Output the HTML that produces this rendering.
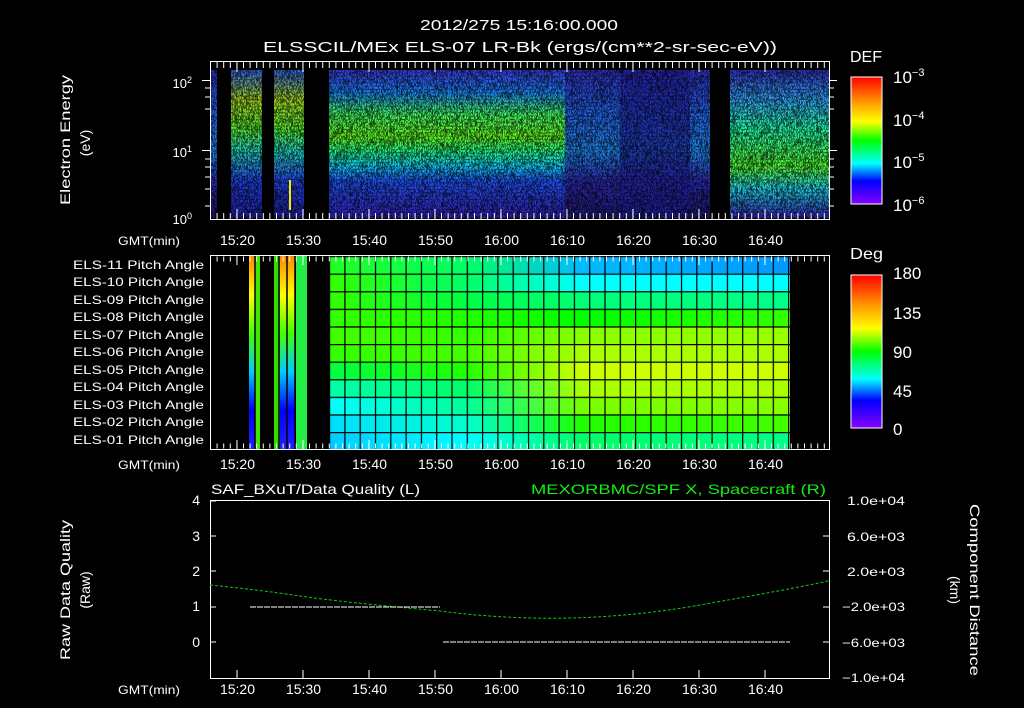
<!DOCTYPE html>
<html><head><meta charset="utf-8"><style>
html,body{margin:0;padding:0;background:#000;width:1024px;height:708px;overflow:hidden}
svg text{font-family:"Liberation Sans",sans-serif;fill:#fff}
</style></head><body>
<svg width="1024" height="708" viewBox="0 0 1024 708" xmlns="http://www.w3.org/2000/svg">
<defs>
<linearGradient id="cb" x1="0" y1="0" x2="0" y2="1">
<stop offset="0" stop-color="#f00"/><stop offset="0.2" stop-color="#f90"/><stop offset="0.35" stop-color="#ff0"/><stop offset="0.5" stop-color="#0f0"/><stop offset="0.68" stop-color="#0ff"/><stop offset="0.82" stop-color="#00f"/><stop offset="1" stop-color="#80f"/>
</linearGradient>
<linearGradient id="spA" x1="0" y1="0" x2="0" y2="1">
<stop offset="0" stop-color="#3a3ae0"/><stop offset="0.15" stop-color="#1a80f0"/><stop offset="0.3" stop-color="#3ff060"/><stop offset="0.45" stop-color="#60f020"/><stop offset="0.55" stop-color="#20f080"/><stop offset="0.65" stop-color="#10c8f0"/><stop offset="0.75" stop-color="#2050f0"/><stop offset="1" stop-color="#3020b0"/>
</linearGradient>
<linearGradient id="spB" x1="0" y1="0" x2="0" y2="1">
<stop offset="0" stop-color="#2a60e0"/><stop offset="0.2" stop-color="#a0d020"/><stop offset="0.4" stop-color="#50e030"/><stop offset="0.55" stop-color="#20d0c0"/><stop offset="0.75" stop-color="#2040e0"/><stop offset="1" stop-color="#2020a0"/>
</linearGradient>
<linearGradient id="spC" x1="0" y1="0" x2="0" y2="1">
<stop offset="0" stop-color="#3030c0"/><stop offset="0.3" stop-color="#2060e0"/><stop offset="0.55" stop-color="#2080e0"/><stop offset="0.75" stop-color="#2a2ab0"/><stop offset="1" stop-color="#201870"/>
</linearGradient>
<linearGradient id="spD" x1="0" y1="0" x2="0" y2="1">
<stop offset="0" stop-color="#3030c0"/><stop offset="0.2" stop-color="#30a0f0"/><stop offset="0.4" stop-color="#20f0a0"/><stop offset="0.65" stop-color="#50f030"/><stop offset="0.8" stop-color="#20d0e0"/><stop offset="1" stop-color="#3020b0"/>
</linearGradient>
<filter id="noise" x="0" y="0" width="1" height="1"><feTurbulence type="turbulence" baseFrequency="0.6 0.3" numOctaves="2" seed="5"/><feColorMatrix values="0 0 0 0 0  0 0 0 0 0  0 0 0 0 0  0 0 0 -3 1.2"/></filter>
</defs>

<text x="420" y="30" font-size="15" textLength="198" lengthAdjust="spacingAndGlyphs">2012/275 15:16:00.000</text>
<text x="263" y="52" font-size="15" textLength="514" lengthAdjust="spacingAndGlyphs">ELSSCIL/MEx ELS-07 LR-Bk  (ergs/(cm**2-sr-sec-eV))</text>

<!-- TOP PANEL -->
<rect x="210" y="70" width="7" height="148" fill="url(#spC)"/>
<rect x="231" y="70" width="31" height="148" fill="url(#spB)"/>
<rect x="274" y="70" width="30" height="148" fill="url(#spB)"/>
<rect x="329" y="70" width="236" height="148" fill="url(#spA)"/>
<rect x="565" y="70" width="140" height="148" fill="url(#spC)"/>
<rect x="620" y="70" width="70" height="148" fill="#2020a0" opacity="0.7"/>
<rect x="695" y="70" width="15" height="148" fill="url(#spC)"/>
<rect x="730" y="70" width="99" height="148" fill="url(#spD)"/>
<rect x="210" y="70" width="620" height="148" filter="url(#noise)" opacity="0.8"/>
<rect x="217" y="62" width="14" height="157" fill="#000"/>
<rect x="262" y="62" width="12" height="157" fill="#000"/>
<rect x="304" y="62" width="25" height="157" fill="#000"/>
<rect x="289" y="180" width="2" height="30" fill="#ee0"/>
<rect x="210.5" y="61.5" width="619" height="158" fill="none" stroke="#fff"/>
<g stroke="#fff">
<path d="M210 65H830M210 216H830" stroke-width="6" stroke-dasharray="1 5.6"/>
<path d="M237 62v10M303 62v10M369 62v10M435 62v10M501 62v10M567 62v10M633 62v10M699 62v10M765 62v10M237 219v-10M303 219v-10M369 219v-10M435 219v-10M501 219v-10M567 219v-10M633 219v-10M699 219v-10M765 219v-10"/>
<path d="M202 80.5h8M205 88h5M205 97h5M205 109h5M202 150.5h8M205 159h5M205 167h5M205 177h5M205 189h5M205 206h5M829 80.5h8M829 88h5M829 97h5M829 109h5M829 150.5h8M829 159h5M829 167h5M829 177h5M829 189h5M829 206h5"/>
</g>
<g font-size="13" text-anchor="end">
<text x="192" y="88">10<tspan dy="-5" font-size="9">2</tspan></text>
<text x="192" y="157">10<tspan dy="-5" font-size="9">1</tspan></text>
<text x="192" y="224">10<tspan dy="-5" font-size="9">0</tspan></text>
</g>
<text transform="translate(70,205) rotate(-90)" font-size="14" textLength="130" lengthAdjust="spacingAndGlyphs">Electron Energy</text>
<text transform="translate(90,143) rotate(-90)" font-size="14" text-anchor="middle">(eV)</text>
<g font-size="14">
<text x="220" y="245" textLength="35" lengthAdjust="spacingAndGlyphs">15:20</text><text x="286" y="245" textLength="35" lengthAdjust="spacingAndGlyphs">15:30</text><text x="352" y="245" textLength="35" lengthAdjust="spacingAndGlyphs">15:40</text><text x="418" y="245" textLength="35" lengthAdjust="spacingAndGlyphs">15:50</text><text x="484" y="245" textLength="35" lengthAdjust="spacingAndGlyphs">16:00</text><text x="550" y="245" textLength="35" lengthAdjust="spacingAndGlyphs">16:10</text><text x="616" y="245" textLength="35" lengthAdjust="spacingAndGlyphs">16:20</text><text x="682" y="245" textLength="35" lengthAdjust="spacingAndGlyphs">16:30</text><text x="748" y="245" textLength="35" lengthAdjust="spacingAndGlyphs">16:40</text>
</g>
<text x="118" y="245" font-size="12" textLength="62" lengthAdjust="spacingAndGlyphs">GMT(min)</text>
<!-- colorbar 1 -->
<rect x="851" y="77" width="31" height="127" fill="url(#cb)" stroke="#fff"/>
<text x="850" y="62" font-size="16" textLength="32" lengthAdjust="spacingAndGlyphs">DEF</text>
<g font-size="17"><text x="893" y="83">10<tspan dy="-7" font-size="11">−3</tspan></text>
<text x="893" y="126">10<tspan dy="-7" font-size="11">−4</tspan></text>
<text x="893" y="168">10<tspan dy="-7" font-size="11">−5</tspan></text>
<text x="893" y="211">10<tspan dy="-7" font-size="11">−6</tspan></text></g>

<!-- MIDDLE PANEL -->
<g>
<defs>
<linearGradient id="r1" x1="0" x2="1"><stop offset="0" stop-color="#2f2"/><stop offset="0.3" stop-color="#0f6"/><stop offset="0.55" stop-color="#0bf"/><stop offset="1" stop-color="#09f"/></linearGradient>
<linearGradient id="r2" x1="0" x2="1"><stop offset="0" stop-color="#3f0"/><stop offset="0.3" stop-color="#0f6"/><stop offset="0.55" stop-color="#0ff"/><stop offset="1" stop-color="#0ff"/></linearGradient>
<linearGradient id="r3" x1="0" x2="1"><stop offset="0" stop-color="#3f0"/><stop offset="0.3" stop-color="#0f4"/><stop offset="0.55" stop-color="#0f7"/><stop offset="1" stop-color="#0f8"/></linearGradient>
<linearGradient id="r4" x1="0" x2="1"><stop offset="0" stop-color="#3f0"/><stop offset="0.3" stop-color="#2f0"/><stop offset="0.55" stop-color="#0f0"/><stop offset="1" stop-color="#3f0"/></linearGradient>
<linearGradient id="r5" x1="0" x2="1"><stop offset="0" stop-color="#4f0"/><stop offset="0.3" stop-color="#3f0"/><stop offset="0.55" stop-color="#8f0"/><stop offset="1" stop-color="#9f0"/></linearGradient>
<linearGradient id="r6" x1="0" x2="1"><stop offset="0" stop-color="#3f0"/><stop offset="0.3" stop-color="#4f0"/><stop offset="0.55" stop-color="#af0"/><stop offset="1" stop-color="#af0"/></linearGradient>
<linearGradient id="r7" x1="0" x2="1"><stop offset="0" stop-color="#0f4"/><stop offset="0.3" stop-color="#2f0"/><stop offset="0.55" stop-color="#cf0"/><stop offset="1" stop-color="#cf0"/></linearGradient>
<linearGradient id="r8" x1="0" x2="1"><stop offset="0" stop-color="#0fa"/><stop offset="0.3" stop-color="#0f6"/><stop offset="0.55" stop-color="#af0"/><stop offset="1" stop-color="#af0"/></linearGradient>
<linearGradient id="r9" x1="0" x2="1"><stop offset="0" stop-color="#0ff"/><stop offset="0.3" stop-color="#0f9"/><stop offset="0.55" stop-color="#7f0"/><stop offset="1" stop-color="#8f0"/></linearGradient>
<linearGradient id="r10" x1="0" x2="1"><stop offset="0" stop-color="#0df"/><stop offset="0.3" stop-color="#0fc"/><stop offset="0.55" stop-color="#2f0"/><stop offset="1" stop-color="#4f0"/></linearGradient>
<linearGradient id="r11" x1="0" x2="1"><stop offset="0" stop-color="#0cf"/><stop offset="0.3" stop-color="#0ff"/><stop offset="0.55" stop-color="#0f6"/><stop offset="1" stop-color="#0f8"/></linearGradient>
<linearGradient id="sA" x1="0" y1="0" x2="0" y2="1"><stop offset="0" stop-color="#f80"/><stop offset="0.2" stop-color="#ff0"/><stop offset="0.4" stop-color="#4f0"/><stop offset="0.6" stop-color="#0cf"/><stop offset="0.8" stop-color="#00f"/><stop offset="1" stop-color="#22f"/></linearGradient>
<pattern id="grid" x="329" y="256" width="15.3" height="17.6" patternUnits="userSpaceOnUse"><rect x="0" y="0" width="1.2" height="17.6" fill="#000"/><rect x="0" y="0" width="15.3" height="1.2" fill="#000"/></pattern>
</defs>
<rect x="329" y="256" width="461" height="17.6" fill="url(#r1)"/>
<rect x="329" y="273.6" width="461" height="17.6" fill="url(#r2)"/>
<rect x="329" y="291.2" width="461" height="17.6" fill="url(#r3)"/>
<rect x="329" y="308.8" width="461" height="17.6" fill="url(#r4)"/>
<rect x="329" y="326.4" width="461" height="17.6" fill="url(#r5)"/>
<rect x="329" y="344" width="461" height="17.6" fill="url(#r6)"/>
<rect x="329" y="361.6" width="461" height="17.6" fill="url(#r7)"/>
<rect x="329" y="379.2" width="461" height="17.6" fill="url(#r8)"/>
<rect x="329" y="396.8" width="461" height="17.6" fill="url(#r9)"/>
<rect x="329" y="414.4" width="461" height="17.6" fill="url(#r10)"/>
<rect x="329" y="432" width="461" height="17" fill="url(#r11)"/>
<rect x="329" y="256" width="462" height="194" fill="url(#grid)"/>
<rect x="249" y="256" width="6" height="193" fill="url(#sA)"/>
<rect x="255" y="256" width="5" height="193" fill="#4f0" opacity="0.9"/>
<rect x="274" y="256" width="6" height="193" fill="#3d0"/>
<rect x="280" y="256" width="15" height="193" fill="url(#sA)"/>
<rect x="296" y="256" width="11" height="193" fill="#2e4"/>
<path d="M255 256v193M261 256v193M279 256v193M287 256v193M295 256v193" stroke="#000" stroke-width="1.5"/>
</g>
<rect x="210.5" y="255.5" width="619" height="194" fill="none" stroke="#fff"/>
<path stroke="#fff" d="M210 259H830M210 446H830" stroke-width="5" stroke-dasharray="1 5.6"/>
<path stroke="#fff" d="M237 256v9M303 256v9M369 256v9M435 256v9M501 256v9M567 256v9M633 256v9M699 256v9M765 256v9M237 449v-9M303 449v-9M369 449v-9M435 449v-9M501 449v-9M567 449v-9M633 449v-9M699 449v-9M765 449v-9"/>
<g font-size="12">
<text x="73" y="269" textLength="131" lengthAdjust="spacingAndGlyphs">ELS-11 Pitch Angle</text><text x="73" y="286" textLength="131" lengthAdjust="spacingAndGlyphs">ELS-10 Pitch Angle</text><text x="73" y="304" textLength="131" lengthAdjust="spacingAndGlyphs">ELS-09 Pitch Angle</text><text x="73" y="321" textLength="131" lengthAdjust="spacingAndGlyphs">ELS-08 Pitch Angle</text><text x="73" y="339" textLength="131" lengthAdjust="spacingAndGlyphs">ELS-07 Pitch Angle</text><text x="73" y="356" textLength="131" lengthAdjust="spacingAndGlyphs">ELS-06 Pitch Angle</text><text x="73" y="374" textLength="131" lengthAdjust="spacingAndGlyphs">ELS-05 Pitch Angle</text><text x="73" y="391" textLength="131" lengthAdjust="spacingAndGlyphs">ELS-04 Pitch Angle</text><text x="73" y="409" textLength="131" lengthAdjust="spacingAndGlyphs">ELS-03 Pitch Angle</text><text x="73" y="426" textLength="131" lengthAdjust="spacingAndGlyphs">ELS-02 Pitch Angle</text><text x="73" y="444" textLength="131" lengthAdjust="spacingAndGlyphs">ELS-01 Pitch Angle</text>
</g>
<g font-size="14">
<text x="220" y="469" textLength="35" lengthAdjust="spacingAndGlyphs">15:20</text><text x="286" y="469" textLength="35" lengthAdjust="spacingAndGlyphs">15:30</text><text x="352" y="469" textLength="35" lengthAdjust="spacingAndGlyphs">15:40</text><text x="418" y="469" textLength="35" lengthAdjust="spacingAndGlyphs">15:50</text><text x="484" y="469" textLength="35" lengthAdjust="spacingAndGlyphs">16:00</text><text x="550" y="469" textLength="35" lengthAdjust="spacingAndGlyphs">16:10</text><text x="616" y="469" textLength="35" lengthAdjust="spacingAndGlyphs">16:20</text><text x="682" y="469" textLength="35" lengthAdjust="spacingAndGlyphs">16:30</text><text x="748" y="469" textLength="35" lengthAdjust="spacingAndGlyphs">16:40</text>
</g>
<text x="118" y="469" font-size="12" textLength="62" lengthAdjust="spacingAndGlyphs">GMT(min)</text>
<rect x="851" y="275" width="31" height="153" fill="url(#cb)" stroke="#fff"/>
<text x="850" y="259" font-size="16" textLength="33" lengthAdjust="spacingAndGlyphs">Deg</text>
<g font-size="17"><text x="893" y="279">180</text><text x="893" y="319">135</text><text x="893" y="358">90</text><text x="893" y="397">45</text><text x="893" y="435">0</text></g>

<!-- BOTTOM PANEL -->
<text x="211" y="494" font-size="14" textLength="209" lengthAdjust="spacingAndGlyphs">SAF_BXuT/Data Quality (L)</text>
<text x="531" y="494" font-size="14" style="fill:#1e1" textLength="295" lengthAdjust="spacingAndGlyphs">MEXORBMC/SPF X, Spacecraft (R)</text>
<rect x="210.5" y="500.5" width="619" height="178" fill="none" stroke="#fff"/>
<path d="M210 585 Q 260 590 300 596 T 440 611 Q 570 628 700 605 T 830 580" fill="none" stroke="#1c1" stroke-dasharray="3 2"/>
<path d="M250 607H440M443 642H790" stroke="#fff" stroke-dasharray="6 1"/>
<path stroke="#fff" d="M210 501h6M210 536h6M210 571h6M210 607h6M210 642h6M829 536h-6M829 571h-6M829 607h-6M829 642h-6M237 678v-8M303 678v-8M369 678v-8M435 678v-8M501 678v-8M567 678v-8M633 678v-8M699 678v-8M765 678v-8"/>
<g font-size="14" text-anchor="end"><text x="200" y="505">4</text><text x="200" y="541">3</text><text x="200" y="576">2</text><text x="200" y="611">1</text><text x="200" y="647">0</text></g>
<g font-size="12"><text x="847" y="505" textLength="58" lengthAdjust="spacingAndGlyphs">1.0e+04</text><text x="847" y="541" textLength="58" lengthAdjust="spacingAndGlyphs">6.0e+03</text><text x="847" y="576" textLength="58" lengthAdjust="spacingAndGlyphs">2.0e+03</text><text x="842" y="611" textLength="63" lengthAdjust="spacingAndGlyphs">−2.0e+03</text><text x="842" y="647" textLength="63" lengthAdjust="spacingAndGlyphs">−6.0e+03</text><text x="842" y="682" textLength="63" lengthAdjust="spacingAndGlyphs">−1.0e+04</text></g>
<text transform="translate(70,660) rotate(-90)" font-size="14" textLength="140" lengthAdjust="spacingAndGlyphs">Raw Data Quality</text>
<text transform="translate(90,590) rotate(-90)" font-size="14" text-anchor="middle">(Raw)</text>
<text transform="translate(970,504) rotate(90)" font-size="14" textLength="172" lengthAdjust="spacingAndGlyphs">Component Distance</text>
<text transform="translate(950,590) rotate(90)" font-size="14" text-anchor="middle">(km)</text>
<g font-size="14">
<text x="220" y="694" textLength="35" lengthAdjust="spacingAndGlyphs">15:20</text><text x="286" y="694" textLength="35" lengthAdjust="spacingAndGlyphs">15:30</text><text x="352" y="694" textLength="35" lengthAdjust="spacingAndGlyphs">15:40</text><text x="418" y="694" textLength="35" lengthAdjust="spacingAndGlyphs">15:50</text><text x="484" y="694" textLength="35" lengthAdjust="spacingAndGlyphs">16:00</text><text x="550" y="694" textLength="35" lengthAdjust="spacingAndGlyphs">16:10</text><text x="616" y="694" textLength="35" lengthAdjust="spacingAndGlyphs">16:20</text><text x="682" y="694" textLength="35" lengthAdjust="spacingAndGlyphs">16:30</text><text x="748" y="694" textLength="35" lengthAdjust="spacingAndGlyphs">16:40</text>
</g>
<text x="118" y="694" font-size="12" textLength="62" lengthAdjust="spacingAndGlyphs">GMT(min)</text>
</svg>
</body></html>
